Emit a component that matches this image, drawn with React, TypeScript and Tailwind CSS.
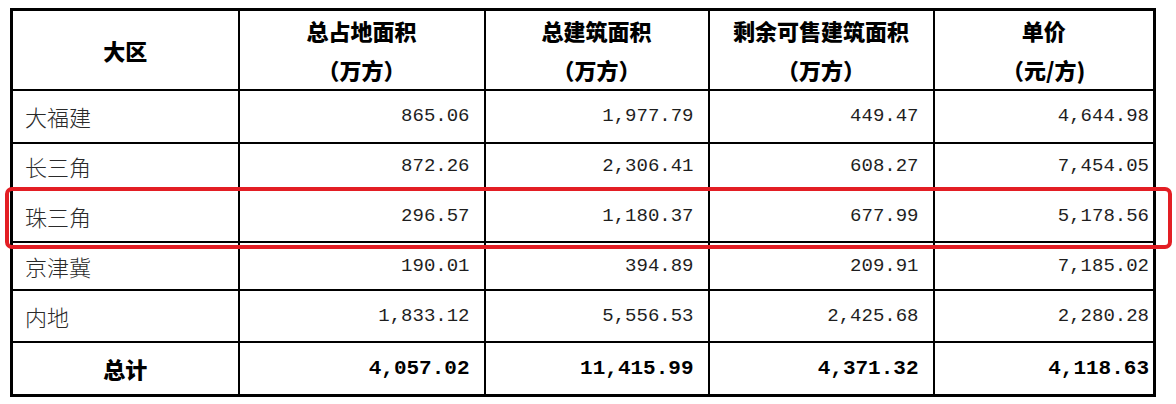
import React from 'react';

const rows = [
    { name: '大福建', a: '865.06', b: '1,977.79', c: '449.47', d: '4,644.98' },
    { name: '长三角', a: '872.26', b: '2,306.41', c: '608.27', d: '7,454.05' },
    { name: '珠三角', a: '296.57', b: '1,180.37', c: '677.99', d: '5,178.56' },
    { name: '京津冀', a: '190.01', b: '394.89', c: '209.91', d: '7,185.02' },
    { name: '内地', a: '1,833.12', b: '5,556.53', c: '2,425.68', d: '2,280.28' },
];

const heights = ['h-[53px]', 'h-[47px]', 'h-[52px]', 'h-[48px]', 'h-[52px]'];

const cjk = "font-['Noto_Sans_CJK_SC',sans-serif]";
const num = "font-['Liberation_Mono','Noto_Sans_CJK_SC',monospace]";

export default function App() {
    return (
        <div className="w-[1176px] h-[404px] bg-white pt-[8px] pl-[10px] overflow-hidden">
            <div className="relative w-[1143px]">
                <table className="w-[1143px] table-fixed border-collapse border-[3px] border-black">
                    <colgroup>
                        <col className="w-[227px]" />
                        <col className="w-[246px]" />
                        <col className="w-[224px]" />
                        <col className="w-[225px]" />
                        <col className="w-[221px]" />
                    </colgroup>
                    <thead>
                        <tr className={`h-[80px] ${cjk} font-bold text-[22px] text-black leading-[39px]`}>
                            <th className="border-2 border-black font-black">大区</th>
                            <th className="border-2 border-black font-black">总占地面积<br />（万方）</th>
                            <th className="border-2 border-black font-black">总建筑面积<br />（万方）</th>
                            <th className="border-2 border-black font-black">剩余可售建筑面积<br />（万方）</th>
                            <th className="border-2 border-black font-black">单价<br />（元/方)</th>
                        </tr>
                    </thead>
                    <tbody>
                        {rows.map((r, i) => (
                            <tr key={r.name} className={heights[i]}>
                                <td className={`border-2 border-black pl-[12px] ${cjk} font-light text-[22px] text-[#2a2a2a]`}>{r.name}</td>
                                <td className={`border-2 border-black pr-[14px] text-right ${num} text-[19px] text-[#1e1e1e]`}>{r.a}</td>
                                <td className={`border-2 border-black pr-[14px] text-right ${num} text-[19px] text-[#1e1e1e]`}>{r.b}</td>
                                <td className={`border-2 border-black pr-[14px] text-right ${num} text-[19px] text-[#1e1e1e]`}>{r.c}</td>
                                <td className={`border-2 border-black pr-[4px] text-right ${num} text-[19px] text-[#1e1e1e]`}>{r.d}</td>
                            </tr>
                        ))}
                        <tr className="h-[53px]">
                            <td className={`border-2 border-black text-center ${cjk} font-black text-[22px] text-black`}>总计</td>
                            <td className={`border-2 border-black pr-[14px] text-right ${num} font-bold text-[21px] text-black`}>4,057.02</td>
                            <td className={`border-2 border-black pr-[14px] text-right ${num} font-bold text-[21px] text-black`}>11,415.99</td>
                            <td className={`border-2 border-black pr-[14px] text-right ${num} font-bold text-[21px] text-black`}>4,371.32</td>
                            <td className={`border-2 border-black pr-[4px] text-right ${num} font-bold text-[21px] text-black`}>4,118.63</td>
                        </tr>
                    </tbody>
                </table>
                {/* red highlight over 珠三角 row */}
                <div className="absolute left-[-5px] top-[179px] w-[1167px] h-[62px] border-4 border-[#e31e24] rounded-[7px] pointer-events-none" />
            </div>
        </div>
    );
}
